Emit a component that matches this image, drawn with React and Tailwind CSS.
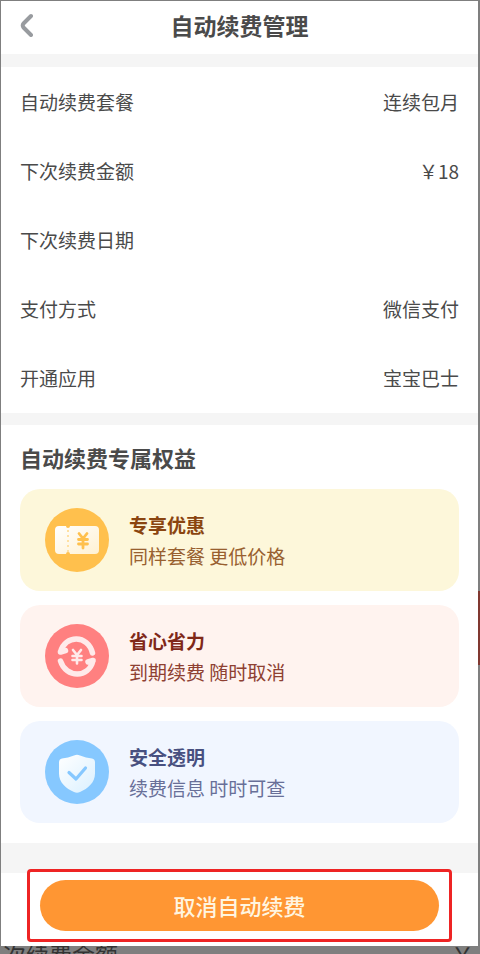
import React from 'react';

const DETAILS = [
  { label: '自动续费套餐', value: '连续包月' },
  { label: '下次续费金额', value: '￥18' },
  { label: '下次续费日期', value: '' },
  { label: '支付方式', value: '微信支付' },
  { label: '开通应用', value: '宝宝巴士' },
];

function CouponIcon() {
  return (
    <svg viewBox="0 0 64 64" className="size-16 shrink-0" aria-hidden="true">
      <defs>
        <linearGradient id="coupon" x1="0" y1="0" x2="1" y2="1">
          <stop offset="0" stopColor="#fff" />
          <stop offset="1" stopColor="#fff1d2" />
        </linearGradient>
      </defs>
      <circle cx="32" cy="32" r="32" fill="#ffc04d" />
      <path
        d="M14 18h7a2 2 0 0 0 4 0h25a4 4 0 0 1 4 4v20a4 4 0 0 1-4 4H25a2 2 0 0 0-4 0h-7a4 4 0 0 1-4-4V22a4 4 0 0 1 4-4Z"
        fill="url(#coupon)"
      />
      <path d="M23 22v22" stroke="#ffe0a3" strokeWidth="2" strokeDasharray="2 3" />
      <path
        d="m34 25.500 4 5 4-5M33.500 31.500h9M33.500 36h9M38 30.500v9.500"
        fill="none"
        stroke="#ffc04d"
        strokeWidth="2.800"
        strokeLinecap="round"
      />
    </svg>
  );
}

function RenewIcon() {
  return (
    <svg viewBox="0 0 64 64" className="size-16 shrink-0" aria-hidden="true">
      <circle cx="32" cy="32" r="32" fill="#ff8080" />
      <g fill="none" stroke="#ffeaea" strokeLinecap="round" strokeLinejoin="round">
        <path d="M15.500 28C20 10.500 43 10.500 47.500 29M15.500 28l5-1.500M48 36.500C44 54.500 21 54.500 15.500 37M48 36.500l-5 1.500" strokeWidth="5.500" />
        <path d="m28 26 4 5 4-5M27.500 32h9M27.500 36h9M32 31v8.500" strokeWidth="2.600" />
      </g>
    </svg>
  );
}

function ShieldIcon() {
  return (
    <svg viewBox="0 0 64 64" className="size-16 shrink-0" aria-hidden="true">
      <defs>
        <linearGradient id="shield" x1="0" y1="0" x2="1" y2="1">
          <stop offset="0" stopColor="#fff" />
          <stop offset="1" stopColor="#daf0ff" />
        </linearGradient>
      </defs>
      <circle cx="32" cy="32" r="32" fill="#86c8ff" />
      <path
        d="M29 15.500q3-1.500 6 0c4 1.500 8 2.500 12 3q3 .5 3 4v11c0 9-7 15-15 18.500q-3 1.300-6 0C21 48.500 14 42.500 14 33.500v-11q0-3.500 3-4c4-.5 8-1.500 12-3Z"
        fill="url(#shield)"
      />
      <path d="m24 32.500 7 6.500 9.500-11" fill="none" stroke="#86c8ff" strokeWidth="3.200" strokeLinecap="round" strokeLinejoin="round" />
    </svg>
  );
}

const BENEFITS = [
  {
    title: '专享优惠',
    text: '同样套餐 更低价格',
    icon: CouponIcon,
    card: 'bg-[#fdf7da]',
    titleColor: 'text-[#8a4510]',
    textColor: 'text-[#98602f]',
  },
  {
    title: '省心省力',
    text: '到期续费 随时取消',
    icon: RenewIcon,
    card: 'bg-[#fff3ef]',
    titleColor: 'text-[#802818]',
    textColor: 'text-[#8e4032]',
  },
  {
    title: '安全透明',
    text: '续费信息 时时可查',
    icon: ShieldIcon,
    card: 'bg-[#f1f6ff]',
    titleColor: 'text-[#485080]',
    textColor: 'text-[#686f98]',
  },
];

function DetailRow({ label, value }) {
  return (
    <div className="flex h-[69px] items-center justify-between">
      <dt>{label}</dt>
      <dd>{value}</dd>
    </div>
  );
}

function BenefitCard({ item }) {
  const Icon = item.icon;
  return (
    <li className={`flex items-center gap-5 rounded-[20px] py-[19px] pl-[25px] ${item.card}`}>
      <Icon />
      <div className="text-[19px] leading-[31px]">
        <h3 className={`font-bold ${item.titleColor}`}>{item.title}</h3>
        <p className={item.textColor}>{item.text}</p>
      </div>
    </li>
  );
}

export default function App() {
  return (
    <div className="relative overflow-hidden bg-[#7f7f7f] pt-px pr-0.5 pl-px font-['Noto_Sans_CJK_SC',sans-serif] text-[#4a4a4a]">
      {/* edge of the dimmed page behind the panel */}
      <div className="absolute top-[591px] right-0 h-[74px] w-0.5 bg-[#803830]" />

      <main className="bg-white">
        <header className="grid h-[53px] grid-cols-[48px_1fr_48px] items-center pb-1.5">
          <button type="button" aria-label="返回" className="pl-[18px] text-[#989b9f]">
            <svg viewBox="0 0 14 24" className="h-6 w-3.5" fill="none" stroke="currentColor" strokeWidth="4" strokeLinecap="round" strokeLinejoin="round">
              <path d="M12 3 4.500 10.500q-1.500 2 0 4L12 22" />
            </svg>
          </button>
          <h1 className="text-center text-[23px] leading-8 font-bold">自动续费管理</h1>
        </header>

        <div className="h-[13px] bg-[#f5f5f5]" />

        <dl className="px-[19px] pb-px text-[19px] leading-7">
          {DETAILS.map((row) => (
            <DetailRow key={row.label} label={row.label} value={row.value} />
          ))}
        </dl>

        <div className="h-3 bg-[#f5f5f5]" />

        <section className="px-[19px] pt-4 pb-5">
          <h2 className="text-[22px] leading-8 font-bold">自动续费专属权益</h2>
          <ul className="mt-4 space-y-3.5">
            {BENEFITS.map((item) => (
              <BenefitCard key={item.title} item={item} />
            ))}
          </ul>
        </section>

        <div className="h-[30px] bg-[#f5f5f5]" />

        <div className="relative -mt-1 px-[26px] pb-1">
          <div className="rounded-sm border-[3px] border-[#ee2424] bg-white px-2.5 py-2">
            <button type="button" className="h-[51px] w-full rounded-full bg-[#ff9633] text-[22px] font-medium text-[#fff5e0]">
              取消自动续费
            </button>
          </div>
        </div>
      </main>

      <div className="flex h-2 justify-between overflow-hidden pr-1 pl-0.5 text-[23px] leading-4 text-[#333]">
        <span>次续费金额</span>
        <span>￥</span>
      </div>
    </div>
  );
}
